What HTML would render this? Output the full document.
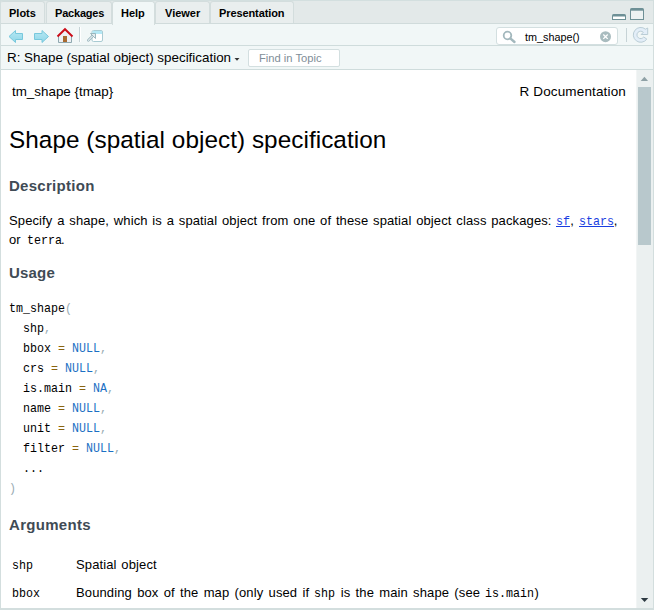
<!DOCTYPE html>
<html><head><meta charset="utf-8">
<style>
*{box-sizing:border-box;margin:0;padding:0}
html,body{width:654px;height:610px;overflow:hidden;background:#fff}
body{position:relative;font-family:"Liberation Sans",sans-serif;color:#000}
.abs{position:absolute}
#tabbar{left:0;top:0;width:654px;height:24px;background:#e3e9e9;border-bottom:1px solid #d0dbdb;border-top:1px solid #d3dfdf}
.tab{position:absolute;top:0px;height:22px;background:#e9eeee;border:1px solid #d3dddd;border-bottom:none;border-radius:3px 3px 0 0;font-weight:bold;font-size:11px;color:#000;line-height:15px;padding-top:4px;white-space:pre}
.tab.active{background:#f1f7f7;height:24px;z-index:2}
#tb1{left:0;top:24px;width:654px;height:22px;background:#f1f7f7;border-bottom:1px solid #cfdcdc}
#tb2{left:0;top:46px;width:654px;height:24px;background:#f1f7f7;border-bottom:1px solid #cfdcdc}
#content{left:1px;top:70px;width:635px;height:538px;background:#fff;overflow:hidden}
#sb{left:636px;top:70px;width:17px;height:538px;background:#ebf0f0;border-left:1px solid #f2f5f5}
#lb{left:0;top:0;width:1px;height:610px;background:#d3dede;z-index:5}
#rb{left:653px;top:0;width:1px;height:610px;background:#d3dede;z-index:5}
#bb{left:0;top:608px;width:654px;height:2px;background:#d3dede;z-index:5}
.t{position:absolute;white-space:pre}
.mono{font-family:"Liberation Mono",monospace;font-size:11.67px}
.h2{font-weight:bold;font-size:15px;line-height:20px;color:#3f4b55}
.para{font-size:13px;line-height:18px;color:#000;word-spacing:1px;letter-spacing:0.12px}
.para .mono{font-size:13px;letter-spacing:0;display:inline-block;transform:scaleX(0.8974);transform-origin:0 0}
a.mono{color:#1a3ee0;text-decoration:underline}
.code{font-family:"Liberation Mono",monospace;font-size:13px;line-height:20px;color:#000;transform:scaleX(0.8974);transform-origin:0 0}
.code .p{color:#9aacb4}.code .o{color:#8a6410}.code .n{color:#1c70c4}
</style></head><body>
<div id="lb" class="abs"></div><div id="rb" class="abs"></div><div id="bb" class="abs"></div>

<div id="tabbar" class="abs">
  <div class="tab" style="left:0px;width:45px;padding-left:9px;border-left:none">Plots</div>
  <div class="tab" style="left:46px;width:66px;padding-left:8px;letter-spacing:-0.2px">Packages</div>
  <div class="tab active" style="left:112px;width:43px;padding-left:8px">Help</div>
  <div class="tab" style="left:155px;width:55px;padding-left:9px">Viewer</div>
  <div class="tab" style="left:210px;width:84px;padding-left:8px;letter-spacing:-0.1px">Presentation</div>
</div>

<div id="tb1" class="abs"></div>

<svg class="abs" style="left:0;top:0" width="654" height="24" viewBox="0 0 654 24">
  <path d="M612,20 L612,15.6 Q612,14 613.6,14 L624.4,14 Q626,14 626,15.6 L626,20 Z" fill="#6e9096"/>
  <rect x="613" y="16.5" width="12" height="2.5" fill="#fff"/>
  <path d="M630,20 L630,9.6 Q630,8 631.6,8 L642.4,8 Q644,8 644,9.6 L644,20 Z" fill="#6e9096"/>
  <rect x="631" y="10.7" width="12" height="8.3" fill="#edf2f2"/>
</svg>
<svg class="abs" style="left:0;top:0" width="654" height="70" viewBox="0 0 654 70">
  <defs>
    <linearGradient id="ag" x1="0" y1="0" x2="0" y2="1"><stop offset="0" stop-color="#b6e8f3"/><stop offset="1" stop-color="#8fd6e8"/></linearGradient>
  </defs>
  <polygon points="9,36.5 15.5,30.5 15.5,33.5 22.5,33.5 22.5,39.5 15.5,39.5 15.5,42.5" fill="url(#ag)" stroke="#78c8dc" stroke-width="1" stroke-linejoin="round"/>
  <polygon points="48.5,36.5 42,30.5 42,33.5 34.5,33.5 34.5,39.5 42,39.5 42,42.5" fill="url(#ag)" stroke="#78c8dc" stroke-width="1" stroke-linejoin="round"/>
  <!-- home -->
  <polygon points="58.5,35 65,29.5 71.5,35 71.5,42.5 58.5,42.5" fill="#eef0f3"/><polyline points="58.5,35 58.5,42.5 71.5,42.5 71.5,35" fill="none" stroke="#8fa9b0" stroke-width="1"/>
  <rect x="63" y="36" width="4" height="6" fill="#a86a30"/>
  <polyline points="57.5,36.5 65,29.2 72.5,36.5" fill="none" stroke="#cc0c18" stroke-width="1.9"/>
  <!-- separator -->
  <rect x="79" y="27" width="1" height="15" fill="#c6d3d6"/>
  <rect x="80" y="27" width="1" height="15" fill="#ffffff"/>
  <!-- popout -->
  <rect x="92" y="30.5" width="10.5" height="11" rx="1.5" fill="#ffffff" stroke="#a9cbd2" stroke-width="1"/>
  <rect x="92.5" y="31" width="9.5" height="3" fill="#b5e8f5"/>
  <line x1="88.3" y1="40.3" x2="93" y2="35.6" stroke="#93b1b8" stroke-width="2.6" stroke-linecap="round"/><line x1="88.3" y1="40.3" x2="93" y2="35.6" stroke="#e4ebef" stroke-width="1.2" stroke-linecap="round"/><polygon points="90.5,33.5 95.5,33.5 95.5,38.5" fill="#e4ebef" stroke="#93b1b8" stroke-width="0.9" stroke-linejoin="round"/>
  <!-- right separator -->
  <rect x="626" y="28" width="1" height="14" fill="#c6d3d6"/>
  <!-- refresh -->
  <path d="M645.5,29.2 A7.4,7.4 0 1 0 646.8,39.1 L643.7,37 A3.7,3.7 0 1 1 643.3,32.3 L641.2,34.5 L647.7,34.5 L647.7,28 Z" fill="#e3eef8" stroke="#bacdd6" stroke-width="1" stroke-linejoin="round"/>
</svg>
<div class="abs" style="left:496px;top:27px;width:122px;height:18px;background:#fff;border:1px solid #d3dfe0;border-radius:3px"></div>
<svg class="abs" style="left:0;top:0" width="654" height="70" viewBox="0 0 654 70">
  <circle cx="507.5" cy="35.5" r="3.8" fill="none" stroke="#a3b8bd" stroke-width="1.8"/>
  <line x1="510.3" y1="38.3" x2="514.5" y2="42" stroke="#a3b8bd" stroke-width="2.4" stroke-linecap="round"/>
  <circle cx="605.5" cy="36.7" r="5.5" fill="#a9bcbf"/>
  <path d="M603.3,34.5 L607.7,38.9 M607.7,34.5 L603.3,38.9" stroke="#fff" stroke-width="1.3"/>
</svg>
<div class="t" style="left:525px;top:31px;font-size:10.8px;line-height:13px;color:#000">tm_shape()</div>
<div id="tb2" class="abs"></div>
<div class="t" style="left:7px;top:50px;font-size:13.4px;line-height:16px;color:#000">R: Shape (spatial object) specification</div>
<svg class="abs" style="left:0;top:46px" width="260" height="24"><polygon points="234.5,12 239.5,12 237,14.8" fill="#333"/></svg>
<div class="abs" style="left:248px;top:49px;width:92px;height:18px;background:#fff;border:1px solid #d3dfe0;border-radius:2px"></div>
<div class="t" style="left:259px;top:51px;font-size:11.2px;line-height:14px;color:#7f8e98">Find in Topic</div>

<div id="content" class="abs"></div>
<div class="t" style="left:12px;top:82px;font-size:13.4px;line-height:20px;color:#000">tm_shape {tmap}</div>
<div class="t" style="right:28px;top:82px;font-size:13.5px;line-height:20px;color:#000;letter-spacing:0.15px">R Documentation</div>
<div class="t" style="left:9px;top:125px;font-size:24.3px;line-height:30px;color:#000;letter-spacing:0.05px">Shape (spatial object) specification</div>
<div class="t h2" style="left:9px;top:176px;letter-spacing:0.28px">Description</div>
<div class="t para" style="left:9px;top:212px;line-height:17.5px">Specify a shape, which is a spatial object from one of these spatial object class packages: <a class="mono" style="margin-right:-1.6px">sf</a>, <a class="mono" style="margin-right:-4.0px">stars</a>,<br>or <span class="mono" style="margin-right:-5px;margin-left:1.5px">terra</span>.</div>
<div class="t h2" style="left:9px;top:263px;letter-spacing:0.2px">Usage</div>
<div class="t code" style="left:9px;top:299px">tm_shape<span class="p">(</span>
  shp<span class="p">,</span>
  bbox <span class="o">=</span> <span class="n">NULL</span><span class="p">,</span>
  crs <span class="o">=</span> <span class="n">NULL</span><span class="p">,</span>
  is.main <span class="o">=</span> <span class="n">NA</span><span class="p">,</span>
  name <span class="o">=</span> <span class="n">NULL</span><span class="p">,</span>
  unit <span class="o">=</span> <span class="n">NULL</span><span class="p">,</span>
  filter <span class="o">=</span> <span class="n">NULL</span><span class="p">,</span>
  ...
<span class="p">)</span></div>
<div class="t h2" style="left:9px;top:515px;letter-spacing:0.3px">Arguments</div>
<div class="t code" style="left:12px;top:556px">shp</div>
<div class="t para" style="left:76px;top:556px">Spatial object</div>
<div class="t code" style="left:12px;top:584px">bbox</div>
<div class="t para" style="left:76px;top:584px;word-spacing:1.5px">Bounding box of the map (only used if <span class="mono" style="margin-right:-2.4px">shp</span> is the main shape (see <span class="mono" style="margin-right:-5.6px">is.main</span>)</div>
<div id="sb" class="abs"></div>
<div class="abs" style="left:638px;top:87px;width:13px;height:158px;background:#b8c8cc"></div>
<svg class="abs" style="left:636px;top:70px" width="17" height="538">
  <polygon points="4.7,11 12.1,11 8.4,6.8" fill="#8fa1a6"/>
  <polygon points="4.8,527.9 12.3,527.9 8.55,532.1" fill="#2d3a42"/>
</svg>

</body></html>
